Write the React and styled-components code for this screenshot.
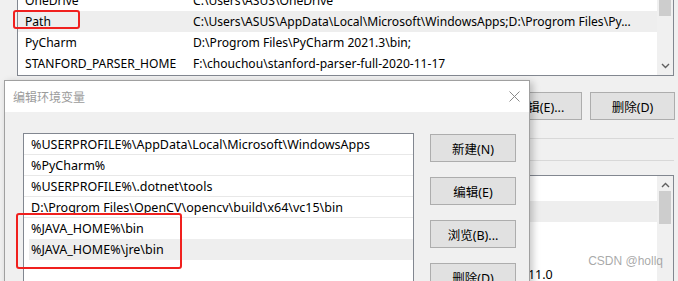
import React from 'react';
import styled, { createGlobalStyle } from 'styled-components';

const Global = createGlobalStyle`
  html, body { margin: 0; padding: 0; background: #f0f0f0; }
  body {
    font-family: "Noto Sans", "Noto Sans CJK SC", sans-serif;
    font-size: 12px;
    color: #000;
  }
`;

const Screen = styled.div`
  position: relative;
  width: 678px;
  height: 281px;
  overflow: hidden;
  background: #f0f0f0;
`;

const BackWindow = styled.div`
  display: flex;
  flex-direction: column;
  padding-left: 17px;
  width: 678px;
  box-sizing: border-box;
`;

const ListBox = styled.div`
  box-sizing: border-box;
  width: 657px;
  height: ${p => p.$height}px;
  margin-top: ${p => p.$mt}px;
  border: 1px solid #828790;
  background: #fff;
  display: flex;
  flex-shrink: 0;
`;

const Rows = styled.div`
  flex: 1;
  padding-top: ${p => p.$pt}px;
  overflow: hidden;
`;

const VarRow = styled.div`
  display: grid;
  grid-template-columns: ${p => p.$col}px 1fr;
  height: 21px;
  line-height: 21px;
  padding-left: 7px;
  font-size: ${p => p.$size}px;
  white-space: nowrap;
  overflow: hidden;
  background: ${p => (p.$selected ? '#eeeeee' : 'transparent')};
`;

const Cell = styled.span`
  overflow: hidden;
`;

const ScrollBar = styled.div`
  width: 16px;
  background: #f0f0f0;
  display: flex;
  flex-direction: column;
  align-items: center;
`;

const Thumb = styled.div`
  width: 12px;
  height: ${p => p.$h}px;
  margin-top: ${p => p.$mt}px;
  background: #cdcdcd;
`;

const Spacer = styled.div`
  flex: 1;
`;

const Arrow = styled.svg`
  display: block;
  margin: ${p => p.$m};
`;

const ButtonRow = styled.div`
  display: flex;
  justify-content: flex-end;
  gap: 8px;
  margin-top: 16px;
  padding-right: 3px;
`;

const WinButton = styled.div`
  box-sizing: border-box;
  width: ${p => p.$w || 86}px;
  height: 28px;
  background: #e1e1e1;
  border: 1px solid #adadad;
  display: flex;
  align-items: center;
  justify-content: center;
  flex-shrink: 0;
  font-size: 12.5px;
`;

const GroupBand = styled.div`
  margin-top: 18px;
  height: 21px;
  border-top: 1px solid #d8d8d8;
  border-bottom: 1px solid #d8d8d8;
  width: 657px;
`;

const Dialog = styled.div`
  position: absolute;
  left: 4px;
  top: 80px;
  width: 526px;
  height: 230px;
  box-sizing: border-box;
  border: 1px solid #a0a0a0;
  background: #f0f0f0;
  box-shadow: 3px 2px 7px rgba(0, 0, 0, 0.22);
  display: flex;
  flex-direction: column;
`;

const TitleBar = styled.div`
  height: 31px;
  background: #fff;
  display: flex;
  align-items: center;
  justify-content: space-between;
  padding: 0 9px 0 8px;
  color: #9b9b9b;
  font-family: "Noto Sans CJK SC", sans-serif;
  font-size: 12px;
`;

const DialogBody = styled.div`
  display: flex;
  padding: 21px 0 0 18px;
  gap: 16px;
`;

const PathList = styled.div`
  box-sizing: border-box;
  width: 391px;
  height: 160px;
  border: 1px solid #828790;
  background: #fff;
`;

const PathRow = styled.div`
  height: 21px;
  line-height: 21px;
  box-sizing: border-box;
  padding-left: 7px;
  font-size: 12.5px;
  white-space: nowrap;
  overflow: hidden;
  border-bottom: ${p => (p.$divider ? '1px solid #e8e8e8' : 'none')};
  background: ${p =>
    p.$selected ? 'linear-gradient(to right, transparent 5px, #eeeeee 5px)' : 'transparent'};
`;

const ButtonColumn = styled.div`
  display: flex;
  flex-direction: column;
  gap: 15px;
  margin-top: 1px;
`;

const Annotation = styled.div`
  position: absolute;
  left: ${p => p.$x}px;
  top: ${p => p.$y}px;
  width: ${p => p.$w}px;
  height: ${p => p.$h}px;
  box-sizing: border-box;
  border: 2px solid #f0201e;
  border-radius: 3px;
`;

const Watermark = styled.div`
  position: absolute;
  right: 15px;
  top: 254px;
  color: rgba(140, 140, 140, 0.75);
  font-family: "Liberation Sans", Arial, sans-serif;
  font-size: 12px;
`;

const topRows = [
  ['OneDrive', 'C:\\Users\\ASUS\\OneDrive'],
  ['Path', 'C:\\Users\\ASUS\\AppData\\Local\\Microsoft\\WindowsApps;D:\\Progrom Files\\Py...', true],
  ['PyCharm', 'D:\\Progrom Files\\PyCharm 2021.3\\bin;'],
  ['STANFORD_PARSER_HOME', 'F:\\chouchou\\stanford-parser-full-2020-11-17'],
];

const lowerRows = [
  ['ComSpec', 'cmd', false, 168],
  ['DriverData', 'Drivers', true, 168],
  ['CLASSPATH', '.;lib', false, 168],
  ['NUMBER_OF_PROCESSORS', '8', false, 168],
  ['JAVA_HOME', 'D:\\Progrom Files\\Java\\jdk-11.0', false, 350],
];

const pathRows = [
  ['%USERPROFILE%\\AppData\\Local\\Microsoft\\WindowsApps', true],
  ['%PyCharm%', true],
  ['%USERPROFILE%\\.dotnet\\tools', true],
  ['D:\\Progrom Files\\OpenCV\\opencv\\build\\x64\\vc15\\bin', true],
  ['%JAVA_HOME%\\bin', false],
  ['%JAVA_HOME%\\jre\\bin', false, true],
];

const Chevron = ({ up, m }) => (
  <Arrow $m={m} width="9" height="6" viewBox="0 0 9 6">
    <path
      d={up ? 'M1 5 L4.5 1.5 L8 5' : 'M1 1 L4.5 4.5 L8 1'}
      fill="none"
      stroke="#606060"
      strokeWidth="1.4"
    />
  </Arrow>
);

export default function App() {
  return (
    <Screen>
      <Global />
      <BackWindow>
        <ListBox $height={88} $mt={-12}>
          <Rows $pt={1}>
            {topRows.map(([n, v, sel]) => (
              <VarRow key={n} $col={168} $size={12.1} $selected={sel}>
                <Cell>{n}</Cell>
                <Cell>{v}</Cell>
              </VarRow>
            ))}
          </Rows>
          <ScrollBar>
            <Thumb $h={27} $mt={0} />
            <Spacer />
            <Chevron m="0 0 6px" />
          </ScrollBar>
        </ListBox>
        <ButtonRow>
          <WinButton $w={85}>编辑(E)...</WinButton>
          <WinButton $w={85}>删除(D)</WinButton>
        </ButtonRow>
        <GroupBand />
        <ListBox $height={120} $mt={14}>
          <Rows $pt={4}>
            {lowerRows.map(([n, v, sel, col]) => (
              <VarRow key={n} $col={col} $size={12.5} $selected={sel}>
                <Cell>{n}</Cell>
                <Cell>{v}</Cell>
              </VarRow>
            ))}
          </Rows>
          <ScrollBar>
            <Chevron up m="6px 0 0" />
            <Thumb $h={33} $mt={3} />
          </ScrollBar>
        </ListBox>
      </BackWindow>

      <Annotation $x={13} $y={10} $w={67} $h={19} />

      <Dialog>
        <TitleBar>
          <span>编辑环境变量</span>
          <svg width="11" height="11" viewBox="0 0 11 11">
            <path d="M0.5 0.5 L10.5 10.5 M10.5 0.5 L0.5 10.5" stroke="#8a8a8a" strokeWidth="1" fill="none" />
          </svg>
        </TitleBar>
        <DialogBody>
          <PathList>
            {pathRows.map(([t, div, sel]) => (
              <PathRow key={t} $divider={div} $selected={sel}>
                {t}
              </PathRow>
            ))}
          </PathList>
          <ButtonColumn>
            <WinButton>新建(N)</WinButton>
            <WinButton>编辑(E)</WinButton>
            <WinButton>浏览(B)...</WinButton>
            <WinButton>删除(D)</WinButton>
          </ButtonColumn>
        </DialogBody>
      </Dialog>

      <Annotation $x={16} $y={213} $w={166} $h={56} />
      <Watermark>CSDN @hollq</Watermark>
    </Screen>
  );
}
